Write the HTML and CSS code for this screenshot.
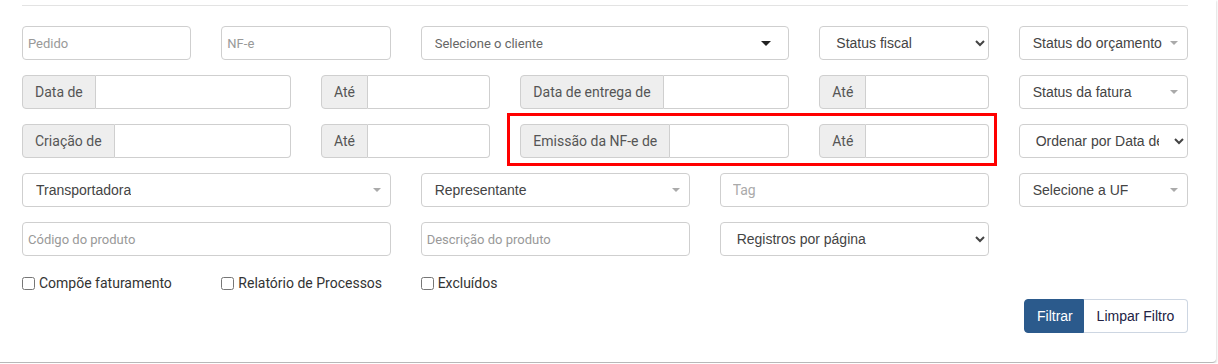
FILE: index.html
```html
<!DOCTYPE html>
<html lang="pt-BR">
<head>
    <meta charset="UTF-8">
    <meta name="viewport" content="width=device-width, initial-scale=1.0">
    <title>Filtros de pedidos</title>
    <link rel="stylesheet" href="styles.css">
</head>
<body>
    <div class="panel">
        <div class="divider"></div>

        <form class="filters">
            <!-- linha 1 -->
            <input class="field c2" type="text" placeholder="Pedido">
            <input class="field c2" type="text" placeholder="NF-e">
            <div class="field select-box client c4">
                <span>Selecione o cliente</span>
                <i class="caret dark"></i>
            </div>
            <select class="field native c2">
                <option>Status fiscal</option>
            </select>
            <div class="field select-box c2">
                <span>Status do orçamento</span>
                <i class="caret"></i>
            </div>

            <!-- linha 2 -->
            <div class="input-group c3">
                <span class="addon">Data de</span>
                <input type="text">
            </div>
            <div class="input-group c2">
                <span class="addon">Até</span>
                <input type="text">
            </div>
            <div class="input-group c3">
                <span class="addon">Data de entrega de</span>
                <input type="text">
            </div>
            <div class="input-group c2">
                <span class="addon">Até</span>
                <input type="text">
            </div>
            <div class="field select-box c2">
                <span>Status da fatura</span>
                <i class="caret"></i>
            </div>

            <!-- linha 3 -->
            <div class="input-group c3">
                <span class="addon">Criação de</span>
                <input type="text">
            </div>
            <div class="input-group c2">
                <span class="addon">Até</span>
                <input type="text">
            </div>
            <div class="input-group c3">
                <span class="addon">Emissão da NF-e de</span>
                <input type="text">
            </div>
            <div class="input-group c2">
                <span class="addon">Até</span>
                <input type="text">
            </div>
            <select class="field native c2">
                <option>Ordenar por Data de emissão</option>
            </select>

            <!-- linha 4 -->
            <div class="field select-box c4">
                <span>Transportadora</span>
                <i class="caret"></i>
            </div>
            <div class="field select-box c3">
                <span>Representante</span>
                <i class="caret"></i>
            </div>
            <input class="field tag c3" type="text" placeholder="Tag">
            <div class="field select-box c2">
                <span>Selecione a UF</span>
                <i class="caret"></i>
            </div>

            <!-- linha 5 -->
            <input class="field c4" type="text" placeholder="Código do produto">
            <input class="field c3" type="text" placeholder="Descrição do produto">
            <select class="field native c3">
                <option>Registros por página</option>
            </select>

            <!-- checkboxes -->
            <label class="check first"><input type="checkbox">Compõe faturamento</label>
            <label class="check"><input type="checkbox">Relatório de Processos</label>
            <label class="check"><input type="checkbox">Excluídos</label>

            <div class="highlight"></div>
        </form>

        <div class="actions">
            <button class="btn primary" type="button">Filtrar</button>
            <button class="btn plain" type="button">Limpar Filtro</button>
        </div>
    </div>
</body>
</html>
```

FILE: styles.css
```css
body {
    margin: 0;
    background-color: #ffffff;
    font-family: Roboto, "Liberation Sans", Arial, sans-serif;
    font-size: 14px;
    color: #333;
}

.panel {
    width: 1216px;
    padding: 5px 0 29px 0;
    background-color: #ffffff;
    border-bottom: 1px solid #b8b8b8;
    border-radius: 0 0 4px 0;
    box-shadow: 1px 1px 2px rgba(0, 0, 0, 0.12);
    box-sizing: border-box;
}

.divider {
    margin: 0 28px 0 22px;
    border-top: 1px solid #e3e3e3;
}

/* grade de 12 colunas */
.filters {
    position: relative;
    display: grid;
    grid-template-columns: repeat(12, minmax(0, 1fr));
    column-gap: 30px;
    row-gap: 15px;
    width: 1166px;
    margin: 20px 0 0 22px;
}

.c2 { grid-column: span 2; }
.c3 { grid-column: span 3; }
.c4 { grid-column: span 4; }

.field {
    width: 100%;
    height: 34px;
    box-sizing: border-box;
    border: 1px solid #cfcfcf;
    border-radius: 4px;
    background-color: #fff;
    font-family: Roboto, sans-serif;
    font-size: 13px;
    padding: 6px 5px;
    color: #555;
    outline: none;
    min-width: 0;
}

.field::placeholder {
    color: #999;
}

.field.tag {
    font-size: 14px;
    padding: 6px 12px;
}

.field.tag::placeholder {
    color: #aaa;
}

.native {
    font-family: "Liberation Sans", Arial, sans-serif;
    font-size: 14px;
    color: #444;
    padding: 6px 12px;
}

.select-box {
    display: flex;
    align-items: center;
    justify-content: space-between;
    padding: 0 9px 0 13px;
    font-family: "Liberation Sans", Arial, sans-serif;
    font-size: 14px;
    color: #444;
}

.select-box span {
    white-space: nowrap;
    overflow: hidden;
}

.select-box.client {
    font-family: Roboto, sans-serif;
    font-size: 13px;
    color: #666;
    padding-right: 17px;
}

.caret {
    flex: none;
    width: 0;
    height: 0;
    border-left: 4px solid transparent;
    border-right: 4px solid transparent;
    border-top: 4px solid #aaa;
}

.caret.dark {
    border-left-width: 5px;
    border-right-width: 5px;
    border-top: 5px solid #222;
}

.input-group {
    display: flex;
    height: 34px;
    min-width: 0;
}

.input-group .addon {
    display: flex;
    align-items: center;
    padding: 0 12px 0 12px;
    background-color: #eeeeee;
    border: 1px solid #cfcfcf;
    border-radius: 4px 0 0 4px;
    color: #555;
    font-size: 14px;
    white-space: nowrap;
}

.input-group input {
    flex: 1;
    min-width: 0;
    border: 1px solid #cfcfcf;
    border-left: none;
    border-radius: 0 4px 4px 0;
    outline: none;
}

.check {
    grid-column: span 2;
    display: flex;
    align-items: center;
    height: 20px;
    margin-top: 2px;
    color: #333;
    font-size: 14px;
    white-space: nowrap;
}

.check.first {
    grid-column: 1 / span 2;
}

.check input {
    width: 13px;
    height: 13px;
    margin: 0 4px 0 0;
}

.highlight {
    position: absolute;
    left: 485px;
    top: 87px;
    width: 490px;
    height: 53px;
    border: 3px solid #ff0000;
    box-sizing: border-box;
    pointer-events: none;
}

.actions {
    display: flex;
    justify-content: flex-end;
    width: 1188px;
    margin-top: 6px;
}

.btn {
    height: 34px;
    padding: 0 12px;
    font-family: "Liberation Sans", Arial, sans-serif;
    font-size: 14px;
    cursor: pointer;
}

.btn.primary {
    width: 60px;
    background-color: #2b5a8c;
    border: 1px solid #2b5a8c;
    color: #fff;
    border-radius: 4px 0 0 4px;
}

.btn.plain {
    width: 104px;
    background-color: #fff;
    border: 1px solid #cdd6e2;
    border-left: none;
    color: #222244;
    border-radius: 0 4px 4px 0;
}
```
